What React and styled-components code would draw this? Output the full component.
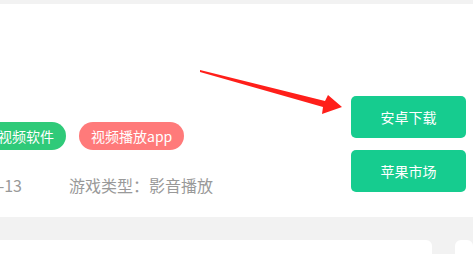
import React from "react";
import styled, { createGlobalStyle } from "styled-components";

const GlobalStyle = createGlobalStyle`
  html, body {
    margin: 0;
    padding: 0;
    background: #f2f2f2;
    overflow: hidden;
    font-family: "Noto Sans CJK SC", "Liberation Sans", sans-serif;
  }
`;

const Page = styled.div`
  width: 473px;
  height: 254px;
  padding-top: 4px;
  box-sizing: border-box;
  overflow: hidden;
`;

const Card = styled.div`
  position: relative;
  height: 213px;
  background: #fff;
  display: flex;
  justify-content: flex-end;
  align-items: flex-start;
  padding: 92px 7px 0 0;
  box-sizing: border-box;
`;

const Info = styled.div`
  flex: 0 0 365px;
  padding-top: 26px;
  display: flex;
  flex-direction: column;
  gap: 23px;
`;

const TagRow = styled.div`
  display: flex;
  gap: 13px;
`;

const Tag = styled.span`
  height: 28px;
  line-height: 28px;
  padding: 0 12px;
  border-radius: 14px;
  background: ${(p) => p.$color};
  color: #fff;
  font-size: 14px;
  white-space: nowrap;
`;

const MetaRow = styled.div`
  display: grid;
  grid-template-columns: 36px auto;
  column-gap: 47px;
  font-size: 16px;
  line-height: 24px;
  color: #999;
`;

const MetaItem = styled.div`
  display: flex;
  justify-content: ${(p) => (p.$end ? "flex-end" : "flex-start")};
  white-space: nowrap;
`;

const Actions = styled.div`
  display: flex;
  flex-direction: column;
  gap: 12px;
`;

const Button = styled.button`
  width: 115px;
  height: 42px;
  border: none;
  border-radius: 5px;
  background: #16cc8f;
  color: #fff;
  font-family: inherit;
  font-size: 14px;
  cursor: pointer;
`;

const Arrow = styled.svg`
  position: absolute;
  left: 195px;
  top: 56px;
  width: 150px;
  height: 60px;
`;

const Lower = styled.div`
  display: flex;
  gap: 23px;
  margin-top: 23px;
`;

const Panel = styled.div`
  height: 30px;
  background: #fff;
  border-radius: 6px 6px 0 0;
  flex: ${(p) => (p.$width ? `0 0 ${p.$width}px` : "1")};
  margin-left: ${(p) => (p.$width ? "-10px" : "0")};
`;

const App = () => {
  return (
    <Page>
      <GlobalStyle />
      <Card>
        <Info>
          <TagRow>
            <Tag $color="#2fca79">视频软件</Tag>
            <Tag $color="#ff7a7a">视频播放app</Tag>
          </TagRow>
          <MetaRow>
            <MetaItem $end>更新时间：2021-05-13</MetaItem>
            <MetaItem>游戏类型：影音播放</MetaItem>
          </MetaRow>
        </Info>
        <Actions>
          <Button>安卓下载</Button>
          <Button>苹果市场</Button>
        </Actions>
        <Arrow viewBox="0 0 150 60">
          <polygon
            points="5,10 130,41 133,35 147,47 127,54 128,47 5,12"
            fill="#ff1f1a"
          />
        </Arrow>
      </Card>
      <Lower>
        <Panel $width={442} />
        <Panel />
      </Lower>
    </Page>
  );
};

export default App;
